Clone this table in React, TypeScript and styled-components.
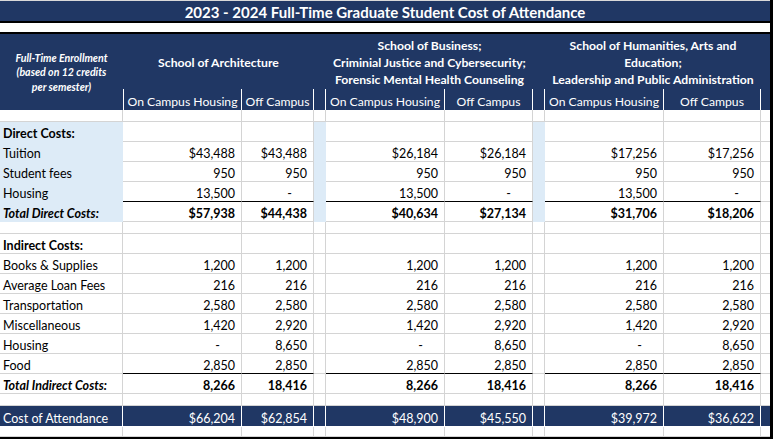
import React from 'react';
import styled, { createGlobalStyle, css } from 'styled-components';

const NAVY = '#203764';
const BLUE = '#DDEBF7';
const GRID = '#D4D4D4';
const COLS = '123px 119px 72px 12px 119px 88px 12px 119px 97px 9px';
const FONT = 'Lato, "Liberation Sans", sans-serif';

const Global = createGlobalStyle`
  html, body { margin: 0; padding: 0; background: #fff; }
  body { font-family: ${FONT}; color: #000; }
  * { box-sizing: border-box; }
`;

const Sheet = styled.div`
  width: 773px;
  border-right: 3px solid #000;
  border-bottom: 2px solid #000;
  background: #fff;
`;

const TitleBar = styled.div`
  height: 23px;
  border-top: 1px solid #d9d9d9;
  border-bottom: 2px solid #000;
  background: ${NAVY};
  color: #fff;
  font-weight: 700;
  font-size: 15px;
  display: flex;
  align-items: center;
  justify-content: center;
  padding-top: 1px;
`;

const Spacer = styled.div`
  height: 11px;
  border-bottom: 2px solid #000;
`;

const Header = styled.div`
  display: grid;
  grid-template-columns: ${COLS};
  grid-template-rows: 55px 21px;
  background: ${NAVY};
  color: #fff;
`;

const Enrollment = styled.div`
  grid-column: 1;
  grid-row: 1 / 3;
  display: flex;
  align-items: center;
  justify-content: center;
  text-align: center;
  font-size: 10.6px;
  font-weight: 700;
  font-style: italic;
  line-height: 14.5px;
  padding-top: 1px;
`;

const Group = styled.div<{ $col: number }>`
  grid-row: 1;
  grid-column: ${(p) => p.$col} / span 2;
  display: flex;
  align-items: center;
  justify-content: center;
  text-align: center;
  font-size: 12.2px;
  font-weight: 700;
  line-height: 17px;
  padding-top: 1px;
`;

const Sub = styled.div<{ $col: number; $first?: boolean; $last?: boolean }>`
  grid-row: 2;
  grid-column: ${(p) => p.$col};
  display: flex;
  align-items: flex-end;
  justify-content: center;
  font-size: 12.2px;
  line-height: 15px;
  padding-bottom: 1px;
  white-space: nowrap;
  ${(p) => !p.$last && css`border-right: 1px solid #fff;`}
  ${(p) => p.$first && css`border-left: 1px solid #fff;`}
`;

const Row = styled.div<{ $h: number }>`
  display: grid;
  grid-template-columns: ${COLS};
  height: ${(p) => p.$h}px;
`;

type Fill = 'none' | 'blue' | 'navy';

const Cell = styled.div<{
  $fill?: Fill;
  $right?: boolean;
  $dash?: boolean;
  $bold?: boolean;
  $italic?: boolean;
  $rule?: boolean;
  $last?: boolean;
}>`
  display: flex;
  align-items: flex-end;
  justify-content: ${(p) => (p.$right ? 'flex-end' : 'flex-start')};
  padding: 0 ${(p) => (p.$dash ? 21 : p.$right ? 6 : 0)}px 0 ${(p) => (p.$right ? 0 : 3)}px;
  font-size: 12.5px;
  line-height: 15px;
  white-space: nowrap;
  font-weight: ${(p) => (p.$bold ? 700 : 400)};
  font-style: ${(p) => (p.$italic ? 'italic' : 'normal')};
  border-bottom: 1px solid ${GRID};
  border-right: 1px solid ${GRID};
  ${(p) => p.$last && css`border-right: none;`}
  ${(p) =>
    p.$fill === 'blue' &&
    css`
      background: ${BLUE};
      border-color: ${BLUE};
    `}
  ${(p) =>
    p.$fill === 'navy' &&
    css`
      background: ${NAVY};
      color: #fff;
      border-color: #fff;
    `}
  ${(p) => p.$rule && css`border-bottom-color: #000;`}
`;

type Kind = 'section' | 'item' | 'total';
interface Line {
  label: string;
  kind: Kind;
  vals: string[];
  rule?: boolean;
}

const direct: Line[] = [
  { label: 'Direct Costs:', kind: 'section', vals: [] },
  { label: 'Tuition', kind: 'item', vals: ['$43,488', '$43,488', '$26,184', '$26,184', '$17,256', '$17,256'] },
  { label: 'Student fees', kind: 'item', vals: ['950', '950', '950', '950', '950', '950'] },
  { label: 'Housing', kind: 'item', vals: ['13,500', '-', '13,500', '-', '13,500', '-'], rule: true },
  { label: 'Total Direct Costs:', kind: 'total', vals: ['$57,938', '$44,438', '$40,634', '$27,134', '$31,706', '$18,206'] },
];

const indirect: Line[] = [
  { label: 'Indirect Costs:', kind: 'section', vals: [] },
  { label: 'Books & Supplies', kind: 'item', vals: ['1,200', '1,200', '1,200', '1,200', '1,200', '1,200'] },
  { label: 'Average Loan Fees', kind: 'item', vals: ['216', '216', '216', '216', '216', '216'] },
  { label: 'Transportation', kind: 'item', vals: ['2,580', '2,580', '2,580', '2,580', '2,580', '2,580'] },
  { label: 'Miscellaneous', kind: 'item', vals: ['1,420', '2,920', '1,420', '2,920', '1,420', '2,920'] },
  { label: 'Housing', kind: 'item', vals: ['-', '8,650', '-', '8,650', '-', '8,650'] },
  { label: 'Food', kind: 'item', vals: ['2,850', '2,850', '2,850', '2,850', '2,850', '2,850'], rule: true },
  { label: 'Total Indirect Costs:', kind: 'total', vals: ['8,266', '18,416', '8,266', '18,416', '8,266', '18,416'] },
];

const totalLine: Line = {
  label: 'Cost of Attendance',
  kind: 'item',
  vals: ['$66,204', '$62,854', '$48,900', '$45,550', '$39,972', '$36,622'],
};

function DataRow({ line, side, fill }: { line: Line; side: Fill; fill?: Fill }) {
  const bold = line.kind !== 'item';
  const v = (i: number) => line.vals[i] ?? '';
  const num = (i: number) => (
    <Cell
      $fill={fill}
      $right
      $dash={v(i) === '-'}
      $bold={line.kind === 'total'}
      $rule={line.rule}
    >
      {v(i)}
    </Cell>
  );
  return (
    <Row $h={20}>
      <Cell $fill={fill ?? side} $bold={bold} $italic={line.kind === 'total'}>
        {line.label}
      </Cell>
      {num(0)}
      {num(1)}
      <Cell $fill={fill ?? side} />
      {num(2)}
      {num(3)}
      <Cell $fill={fill ?? side} />
      {num(4)}
      {num(5)}
      <Cell $fill={fill} $last />
    </Row>
  );
}

function EmptyRow({ h, fill }: { h: number; fill?: Fill }) {
  return (
    <Row $h={h}>
      {Array.from({ length: 10 }, (_, i) => (
        <Cell key={i} $fill={fill} $last={i === 9} />
      ))}
    </Row>
  );
}

export default function App() {
  return (
    <>
      <Global />
      <Sheet>
        <TitleBar>2023 - 2024 Full-Time Graduate Student Cost of Attendance</TitleBar>
        <Spacer />
        <Header>
          <Enrollment>
            Full-Time Enrollment
            <br />
            (based on 12 credits
            <br />
            per semester)
          </Enrollment>
          <Group $col={2}>School of Architecture</Group>
          <Group $col={5}>
            School of Business;
            <br />
            Criminial Justice and Cybersecurity;
            <br />
            Forensic Mental Health Counseling
          </Group>
          <Group $col={8}>
            School of Humanities, Arts and
            <br />
            Education;
            <br />
            Leadership and Public Administration
          </Group>
          <Sub $col={2} $first>On Campus Housing</Sub>
          <Sub $col={3}>Off Campus</Sub>
          <Sub $col={4} />
          <Sub $col={5}>On Campus Housing</Sub>
          <Sub $col={6}>Off Campus</Sub>
          <Sub $col={7} />
          <Sub $col={8}>On Campus Housing</Sub>
          <Sub $col={9}>Off Campus</Sub>
          <Sub $col={10} $last />
        </Header>
        <EmptyRow h={12} />
        {direct.map((l) => (
          <DataRow key={l.label} line={l} side="blue" />
        ))}
        <EmptyRow h={12} />
        {indirect.map((l) => (
          <DataRow key={l.label + l.kind} line={l} side="none" />
        ))}
        <EmptyRow h={12} />
        <Row $h={21}>
          <Cell $fill="navy">{totalLine.label}</Cell>
          {totalLine.vals.slice(0, 2).map((x) => (
            <Cell key={x} $fill="navy" $right>
              {x}
            </Cell>
          ))}
          <Cell $fill="navy" />
          {totalLine.vals.slice(2, 4).map((x) => (
            <Cell key={x} $fill="navy" $right>
              {x}
            </Cell>
          ))}
          <Cell $fill="navy" />
          {totalLine.vals.slice(4, 6).map((x) => (
            <Cell key={x} $fill="navy" $right>
              {x}
            </Cell>
          ))}
          <Cell $fill="navy" $last />
        </Row>
        <EmptyRow h={10} />
      </Sheet>
    </>
  );
}
